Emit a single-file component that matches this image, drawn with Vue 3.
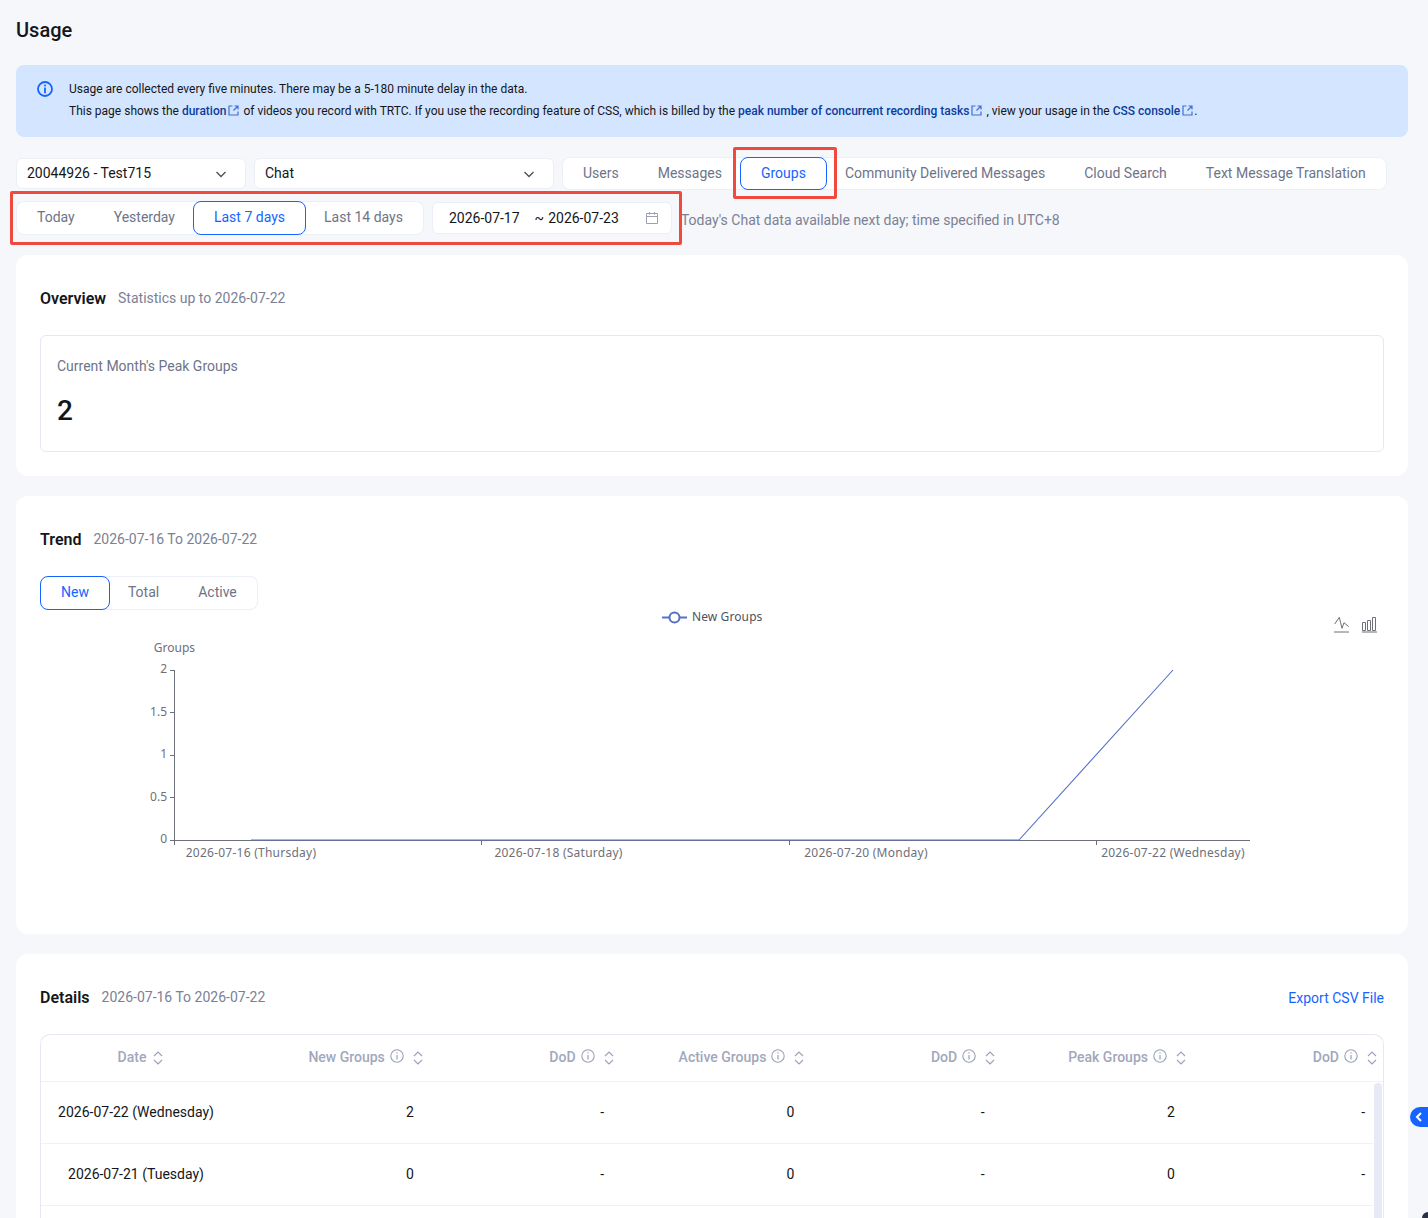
<script setup>
const productTabs = ['Users', 'Messages', 'Groups', 'Community Delivered Messages', 'Cloud Search', 'Text Message Translation']
const rangeTabs = ['Today', 'Yesterday', 'Last 7 days', 'Last 14 days']
const trendTabs = ['New', 'Total', 'Active']

const columns = [
  { label: 'Date', info: false },
  { label: 'New Groups', info: true },
  { label: 'DoD', info: true },
  { label: 'Active Groups', info: true },
  { label: 'DoD', info: true },
  { label: 'Peak Groups', info: true },
  { label: 'DoD', info: true },
]

const rows = [
  ['2026-07-22 (Wednesday)', '2', '-', '0', '-', '2', '-'],
  ['2026-07-21 (Tuesday)', '0', '-', '0', '-', '0', '-'],
]

const yTicks = [
  { label: '2', y: 670.5, textY: 673 },
  { label: '1.5', y: 712.5, textY: 716 },
  { label: '1', y: 755.5, textY: 758 },
  { label: '0.5', y: 797.5, textY: 801 },
  { label: '0', y: 840.5, textY: 843 },
]

const xTicks = [174.5, 481.5, 789.5, 1096.5]

const xLabels = [
  { label: '2026-07-16 (Thursday)', x: 251 },
  { label: '2026-07-18 (Saturday)', x: 558.5 },
  { label: '2026-07-20 (Monday)', x: 866 },
  { label: '2026-07-22 (Wednesday)', x: 1173 },
]
</script>

<template>
  <div class="page">
    <h1 class="page-title">Usage</h1>

    <div class="alert">
      <svg class="alert-icon" width="16" height="16" viewBox="0 0 16 16" aria-hidden="true">
        <circle cx="8" cy="8" r="7" fill="none" stroke="#1664ff" stroke-width="1.8" />
        <rect x="7.1" y="3.6" width="1.8" height="1.8" fill="#1664ff" />
        <rect x="7.1" y="6.6" width="1.8" height="5.6" fill="#1664ff" />
      </svg>
      <div>
        <p>Usage are collected every five minutes. There may be a 5-180 minute delay in the data.</p>
        <p>
          This page shows the <a>duration</a>
          <svg class="ext" width="11" height="11" viewBox="0 0 11 11" aria-hidden="true">
            <path d="M4.5 1H1v9h9V6.5M6.5 1H10v3.5M10 1L5.5 5.5" fill="none" stroke="#3f6fd4" stroke-width="1.2" />
          </svg>
          of videos you record with TRTC. If you use the recording feature of CSS, which is billed by the
          <a>peak number of concurrent recording tasks</a>
          <svg class="ext" width="11" height="11" viewBox="0 0 11 11" aria-hidden="true">
            <path d="M4.5 1H1v9h9V6.5M6.5 1H10v3.5M10 1L5.5 5.5" fill="none" stroke="#3f6fd4" stroke-width="1.2" />
          </svg>
          , view your usage in the <a>CSS console</a>
          <svg class="ext" width="11" height="11" viewBox="0 0 11 11" aria-hidden="true">
            <path d="M4.5 1H1v9h9V6.5M6.5 1H10v3.5M10 1L5.5 5.5" fill="none" stroke="#3f6fd4" stroke-width="1.2" />
          </svg>.
        </p>
      </div>
    </div>

    <div class="filter-row first">
      <div class="select select-app">
        <span>20044926 - Test715</span>
        <svg width="12" height="12" viewBox="0 0 12 12" aria-hidden="true">
          <path d="M1.5 4l4.5 4.5L10.5 4" fill="none" stroke="#4a4f5c" stroke-width="1.3" />
        </svg>
      </div>
      <div class="select select-product">
        <span>Chat</span>
        <svg width="12" height="12" viewBox="0 0 12 12" aria-hidden="true">
          <path d="M1.5 4l4.5 4.5L10.5 4" fill="none" stroke="#4a4f5c" stroke-width="1.3" />
        </svg>
      </div>
      <div class="tabs">
        <button v-for="t in productTabs" :key="t" type="button" class="tab" :class="{ active: t === 'Groups' }">{{ t }}</button>
      </div>
    </div>

    <div class="filter-row second">
      <div class="tabs">
        <button v-for="t in rangeTabs" :key="t" type="button" class="tab" :class="{ active: t === 'Last 7 days' }">{{ t }}</button>
      </div>
      <div class="date-range">
        <span class="date-start">2026-07-17</span>
        <span class="date-sep">~</span>
        <span>2026-07-23</span>
        <svg class="date-icon" width="14" height="14" viewBox="0 0 14 14" aria-hidden="true">
          <path d="M1.5 2.5h11v10h-11zM1.5 5.5h11M4.5 1v2.5M9.5 1v2.5" fill="none" stroke="#9aa0b0" stroke-width="1" />
        </svg>
      </div>
      <span class="note">Today's Chat data available next day; time specified in UTC+8</span>
    </div>

    <section class="card">
      <div class="card-head">
        <h2>Overview</h2>
        <span class="sub">Statistics up to 2026-07-22</span>
      </div>
      <div class="stat">
        <div class="stat-label">Current Month's Peak Groups</div>
        <div class="stat-value">2</div>
      </div>
    </section>

    <section class="card">
      <div class="card-head">
        <h2>Trend</h2>
        <span class="sub">2026-07-16 To 2026-07-22</span>
      </div>
      <div class="tabs trend-tabs">
        <button v-for="t in trendTabs" :key="t" type="button" class="tab" :class="{ active: t === 'New' }">{{ t }}</button>
      </div>
      <svg class="chart" width="1344" height="300" viewBox="40 610 1344 300">
        <!-- legend -->
        <path d="M662 617.5h25" stroke="#5470c6" stroke-width="2" />
        <circle cx="674.5" cy="617.5" r="5" fill="#fff" stroke="#5470c6" stroke-width="2" />
        <text x="692" y="620.5" class="c-legend">New Groups</text>

        <!-- toolbox -->
        <path d="M1334.7 624l4.6-6.7 2.7 11 2-5.6 4.7 4" fill="none" stroke="#6e7079" stroke-width="1" />
        <path d="M1334 632h15M1362 632h15" stroke="#6e7079" stroke-width="1" />
        <path d="M1362.5 622.5h3v8h-3zM1367.5 620.5h3v10h-3zM1372.5 617.5h3v13h-3z" fill="none" stroke="#6e7079" stroke-width="1" />

        <!-- axes -->
        <text x="174.5" y="652" text-anchor="middle" class="c-text">Groups</text>
        <path d="M174.5 670v174M174 840.5h1076" stroke="#6e7079" stroke-width="1" fill="none" />
        <g v-for="t in yTicks" :key="t.label">
          <path :d="`M170 ${t.y}h5`" stroke="#6e7079" stroke-width="1" />
          <text x="167" :y="t.textY" text-anchor="end" class="c-text">{{ t.label }}</text>
        </g>
        <path v-for="x in xTicks" :key="x" :d="`M${x} 841v4`" stroke="#6e7079" stroke-width="1" />
        <text v-for="l in xLabels" :key="l.label" :x="l.x" y="857" text-anchor="middle" class="c-text c-xlabel">{{ l.label }}</text>

        <!-- series -->
        <path d="M251 840H1019L1173 670" fill="none" stroke="#5470c6" stroke-width="1.1" />
      </svg>
    </section>

    <section class="card card-details">
      <div class="card-head details-head">
        <h2>Details</h2>
        <span class="sub">2026-07-16 To 2026-07-22</span>
        <a class="export">Export CSV File</a>
      </div>
      <div class="table">
        <div class="tr th-row">
          <div v-for="(c, i) in columns" :key="i" class="th" :class="{ 'th-date': i === 0 }">
            <span>{{ c.label }}</span>
            <svg v-if="c.info" class="info" width="14" height="14" viewBox="0 0 14 14" aria-hidden="true">
              <circle cx="7" cy="7" r="6.2" fill="none" stroke="#9aa1b8" stroke-width="1.1" />
              <path d="M7 3.2v1.4M7 6v4.6" stroke="#9aa1b8" stroke-width="1.2" />
            </svg>
            <svg class="sort" width="10" height="14" viewBox="0 0 10 14" aria-hidden="true">
              <path d="M1 5l4-4 4 4M1 9l4 4 4-4" fill="none" stroke="#9aa1b8" stroke-width="1.1" />
            </svg>
          </div>
        </div>
        <div v-for="r in rows" :key="r[0]" class="tr td-row">
          <div v-for="(v, i) in r" :key="i" class="td" :class="{ 'td-date': i === 0 }">{{ v }}</div>
        </div>
        <div class="scrollbar"></div>
      </div>
    </section>

    <!-- annotations drawn on top of the screenshot -->
    <div class="mark mark-tab"></div>
    <div class="mark mark-range"></div>

    <div class="side-handle">
      <svg width="8" height="10" viewBox="0 0 8 10" aria-hidden="true">
        <path d="M6 1L2 5l4 4" fill="none" stroke="#fff" stroke-width="2" />
      </svg>
    </div>
    <div class="corner"></div>
  </div>
</template>

<style>
html,
body {
  margin: 0;
  background: #f5f7fb;
}
</style>

<style scoped>
.page {
  position: relative;
  box-sizing: border-box;
  height: 1218px;
  overflow: hidden;
  padding: 16px 20px 0 16px;
  background: #f5f7fb;
  font-family: Roboto, "Liberation Sans", sans-serif;
  font-size: 14px;
  color: #15161a;
}

.page-title {
  margin: 0 0 21px;
  font-size: 20px;
  line-height: 28px;
  font-weight: 500;
}

.alert {
  display: flex;
  gap: 16px;
  box-sizing: border-box;
  height: 72px;
  padding: 13px 21px;
  border-radius: 8px;
  background: #d4e5ff;
  font-size: 12px;
  line-height: 22px;
  color: #15161a;
}

.alert p {
  margin: 0;
}

.alert a {
  color: #0b3d9c;
  font-weight: 500;
}

.alert-icon {
  flex: none;
  margin-top: 3px;
}

.ext {
  margin: 0 1px 0 2px;
  vertical-align: -1px;
}

.filter-row {
  display: flex;
  align-items: center;
  gap: 8px;
}

.filter-row.first {
  margin-top: 20px;
  height: 33px;
}

.filter-row.second {
  margin-top: 11px;
  height: 34px;
}

.select {
  display: flex;
  align-items: center;
  justify-content: space-between;
  box-sizing: border-box;
  height: 31px;
  padding: 0 18px 2px 10px;
  border: 1px solid #eceff6;
  border-radius: 6px;
  background: #fff;
}

.select svg {
  margin-top: 2px;
}

.select-app {
  width: 230px;
}

.select-product {
  width: 300px;
}

.tabs {
  display: flex;
  border: 0;
  border-radius: 8px;
  background: #fff;
  box-shadow: inset 0 0 0 1px #eceff6;
}

.tab {
  box-sizing: border-box;
  height: 33px;
  padding: 0 20px 2px;
  border: 1px solid transparent;
  border-radius: 8px;
  background: transparent;
  font: inherit;
  color: #6e7488;
  white-space: nowrap;
}

.tab + .tab {
  margin-left: -3px;
}

.second .tab,
.trend-tabs .tab {
  height: 34px;
}

.tab.active {
  border-color: #1664ff;
  color: #1664ff;
  background: #fff;
}

.date-range {
  display: flex;
  align-items: center;
  box-sizing: border-box;
  width: 240px;
  height: 32px;
  padding: 0 12px 0 16px;
  border: 1px solid #eceff6;
  border-radius: 6px;
  background: #fff;
}

.date-start {
  margin-right: 15px;
}

.date-sep {
  margin-right: 4px;
}

.date-icon {
  margin-left: auto;
}

.note {
  margin: 4px 0 0 1px;
  color: #7b8194;
}

.card {
  margin-top: 20px;
  padding: 34px 24px 24px;
  border-radius: 12px;
  background: #fff;
}

.card-head {
  display: flex;
  align-items: center;
  gap: 12px;
  height: 20px;
}

.card-head h2 {
  margin: 0;
  font-size: 16px;
  line-height: 20px;
  font-weight: 600;
}

.sub {
  padding-bottom: 2px;
  color: #7b8194;
}

.stat {
  box-sizing: border-box;
  height: 117px;
  margin-top: 26px;
  padding: 20px 16px;
  border: 1px solid #e4e8f0;
  border-radius: 6px;
}

.stat-label {
  line-height: 20px;
  color: #6e7488;
}

.stat-value {
  margin-top: 17px;
  font-size: 28px;
  line-height: 36px;
  font-weight: 500;
}

.trend-tabs {
  width: fit-content;
  margin-top: 26px;
}

.chart {
  display: block;
  overflow: visible;
}

.c-text,
.c-legend {
  font-family: "Noto Sans", "Open Sans", sans-serif;
  font-size: 12px;
  fill: #6e7079;
}

.c-xlabel {
  letter-spacing: 0.25px;
}

.c-legend {
  fill: #4f5260;
  letter-spacing: 0.1px;
}

.details-head {
  margin-bottom: 26px;
}

.export {
  margin-left: auto;
  color: #1664ff;
}

.table {
  position: relative;
  height: 200px;
  border: 1px solid #e4e8f0;
  border-bottom: 0;
  border-radius: 10px 10px 0 0;
}

.tr {
  display: grid;
  grid-template-columns: 198px repeat(5, 190.8px) 1fr;
  border-bottom: 1px solid #f0f2f7;
}

.th-row {
  height: 46px;
}

.td-row {
  width: 1332px;
  grid-template-columns: 198px repeat(5, 190.3px) 1fr;
  height: 61px;
}

.th {
  display: flex;
  align-items: center;
  justify-content: flex-end;
  gap: 5px;
  padding: 0 7px 2px 0;
  font-weight: 500;
  color: #a1a7bc;
}

.th:last-child {
  padding-right: 6px;
}

.th-date {
  justify-content: center;
  padding: 0 0 2px 1px;
}

.info {
  margin-top: -3px;
}

.sort {
  margin: 2px 0 0 4px;
}

.th-date .sort {
  margin-left: 2px;
}

.td {
  display: flex;
  align-items: center;
  justify-content: flex-end;
  padding: 0 15.5px 2px 0;
  white-space: nowrap;
}

.td-date {
  justify-content: center;
  padding-right: 8px;
}

.td:last-child {
  padding-right: 8px;
}

.scrollbar {
  position: absolute;
  top: 48px;
  right: 1px;
  bottom: 0;
  width: 8px;
  border-radius: 4px;
  background: #e6eaf5;
}

.mark {
  position: absolute;
  box-sizing: border-box;
  border: 3px solid #f04a3e;
  border-radius: 2px;
  pointer-events: none;
}

.mark-tab {
  left: 733px;
  top: 147px;
  width: 104px;
  height: 52px;
}

.mark-range {
  left: 10px;
  top: 191px;
  width: 672px;
  height: 54px;
}

.side-handle {
  position: absolute;
  top: 1107px;
  right: 0;
  display: flex;
  align-items: center;
  box-sizing: border-box;
  width: 18px;
  height: 20px;
  padding-left: 5px;
  border-radius: 10px 0 0 10px;
  background: #1664ff;
}

.corner {
  position: absolute;
  right: 0;
  bottom: 0;
  width: 6px;
  height: 6px;
  border-top-left-radius: 6px;
  background: #2b3142;
}
</style>
